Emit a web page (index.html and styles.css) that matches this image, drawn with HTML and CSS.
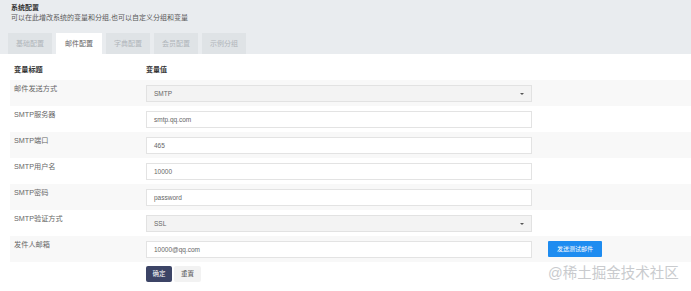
FILE: index.html
```html
<!DOCTYPE html>
<html lang="zh">
<head>
<meta charset="utf-8">
<link rel="stylesheet" href="styles.css">
</head>
<body>
<div class="header">
  <div class="title">系统配置</div>
  <div class="subtitle">可以在此增改系统的变量和分组,也可以自定义分组和变量</div>
  <div class="tabs">
    <div class="tab">基础配置</div>
    <div class="tab active">邮件配置</div>
    <div class="tab">字典配置</div>
    <div class="tab">会员配置</div>
    <div class="tab">示例分组</div>
  </div>
</div>
<div class="content">
  <div class="row head">
    <div class="label">变量标题</div>
    <div class="value">变量值</div>
  </div>
  <div class="row striped">
    <div class="label">邮件发送方式</div>
    <div class="value"><div class="field select">SMTP<span class="caret"></span></div></div>
  </div>
  <div class="row">
    <div class="label">SMTP服务器</div>
    <div class="value"><div class="field">smtp.qq.com</div></div>
  </div>
  <div class="row striped">
    <div class="label">SMTP端口</div>
    <div class="value"><div class="field">465</div></div>
  </div>
  <div class="row">
    <div class="label">SMTP用户名</div>
    <div class="value"><div class="field">10000</div></div>
  </div>
  <div class="row striped">
    <div class="label">SMTP密码</div>
    <div class="value"><div class="field">password</div></div>
  </div>
  <div class="row">
    <div class="label">SMTP验证方式</div>
    <div class="value"><div class="field select">SSL<span class="caret"></span></div></div>
  </div>
  <div class="row striped">
    <div class="label">发件人邮箱</div>
    <div class="value"><div class="field">10000@qq.com</div></div>
    <div class="extra"><span class="btn-test">发送测试邮件</span></div>
  </div>
  <div class="actions">
    <span class="btn primary">确定</span>
    <span class="btn plain">重置</span>
  </div>
</div>
<div class="watermark">@稀土掘金技术社区</div>
</body>
</html>
```
FILE: styles.css
```css
html, body {
  margin: 0;
  padding: 0;
  background: #fff;
  font-family: "Liberation Sans", "Noto Sans CJK SC", sans-serif;
  color: #444;
}
body {
  position: relative;
  width: 691px;
  height: 291px;
  overflow: hidden;
}
.header {
  background: #e9ecef;
  height: 54px;
  padding: 3px 0 0 11px;
  box-sizing: border-box;
}
.title {
  font-size: 7px;
  font-weight: bold;
  line-height: 10px;
  color: #333;
}
.subtitle {
  font-size: 7px;
  line-height: 10px;
  color: #5a5a5a;
}
.tabs {
  display: flex;
  gap: 4px;
  margin: 10px 0 0 -3px;
}
.tab {
  height: 21px;
  line-height: 21px;
  padding: 0 8px;
  font-size: 7px;
  color: #b0b5ba;
  background: #dfe3e6;
}
.tab.active {
  background: #fff;
  color: #666;
  padding: 0 9px;
}
.content {
  padding: 6px 0 0 10px;
}
.row {
  display: flex;
  height: 26px;
  box-sizing: border-box;
  padding-top: 5px;
}
.row.head {
  height: 20px;
  padding-top: 6px;
}
.row.head .label, .row.head .value {
  font-weight: bold;
  color: #333;
  line-height: 8px;
  padding-top: 0;
}
.row.striped {
  background: #f8f8f8;
}
.label {
  width: 136px;
  padding-left: 4px;
  box-sizing: border-box;
  font-size: 7.2px;
  line-height: 8px;
  color: #666;
}
.value {
  width: 386px;
  font-size: 7px;
}
.field {
  height: 17px;
  box-sizing: border-box;
  border: 1px solid #e3e3e3;
  background: #fff;
  padding-left: 7px;
  font-size: 6.5px;
  line-height: 15px;
  color: #666;
  position: relative;
}
.field.select {
  background: #f3f3f3;
  border-color: #e2e2e2;
}
.caret {
  position: absolute;
  right: 7px;
  top: 7px;
  width: 0;
  height: 0;
  border-left: 2px solid transparent;
  border-right: 2px solid transparent;
  border-top: 2px solid #555;
}
.extra {
  padding-left: 16px;
}
.btn-test {
  display: block;
  width: 54px;
  height: 16px;
  line-height: 16px;
  text-align: center;
  background: #1e8cf0;
  color: #fff;
  font-size: 6px;
  border-radius: 1px;
}
.actions {
  display: flex;
  gap: 2px;
  padding: 4px 0 0 136px;
}
.btn {
  display: block;
  height: 16px;
  line-height: 16px;
  font-size: 6.5px;
  text-align: center;
  border-radius: 2px;
}
.btn.primary {
  width: 26px;
  background: #3c4466;
  color: #fff;
}
.btn.plain {
  width: 27px;
  background: #f2f2f2;
  color: #555;
}
.watermark {
  position: absolute;
  left: 548px;
  top: 263px;
  font-size: 14.5px;
  line-height: 20px;
  color: #c9cbce;
  white-space: nowrap;
}
```
